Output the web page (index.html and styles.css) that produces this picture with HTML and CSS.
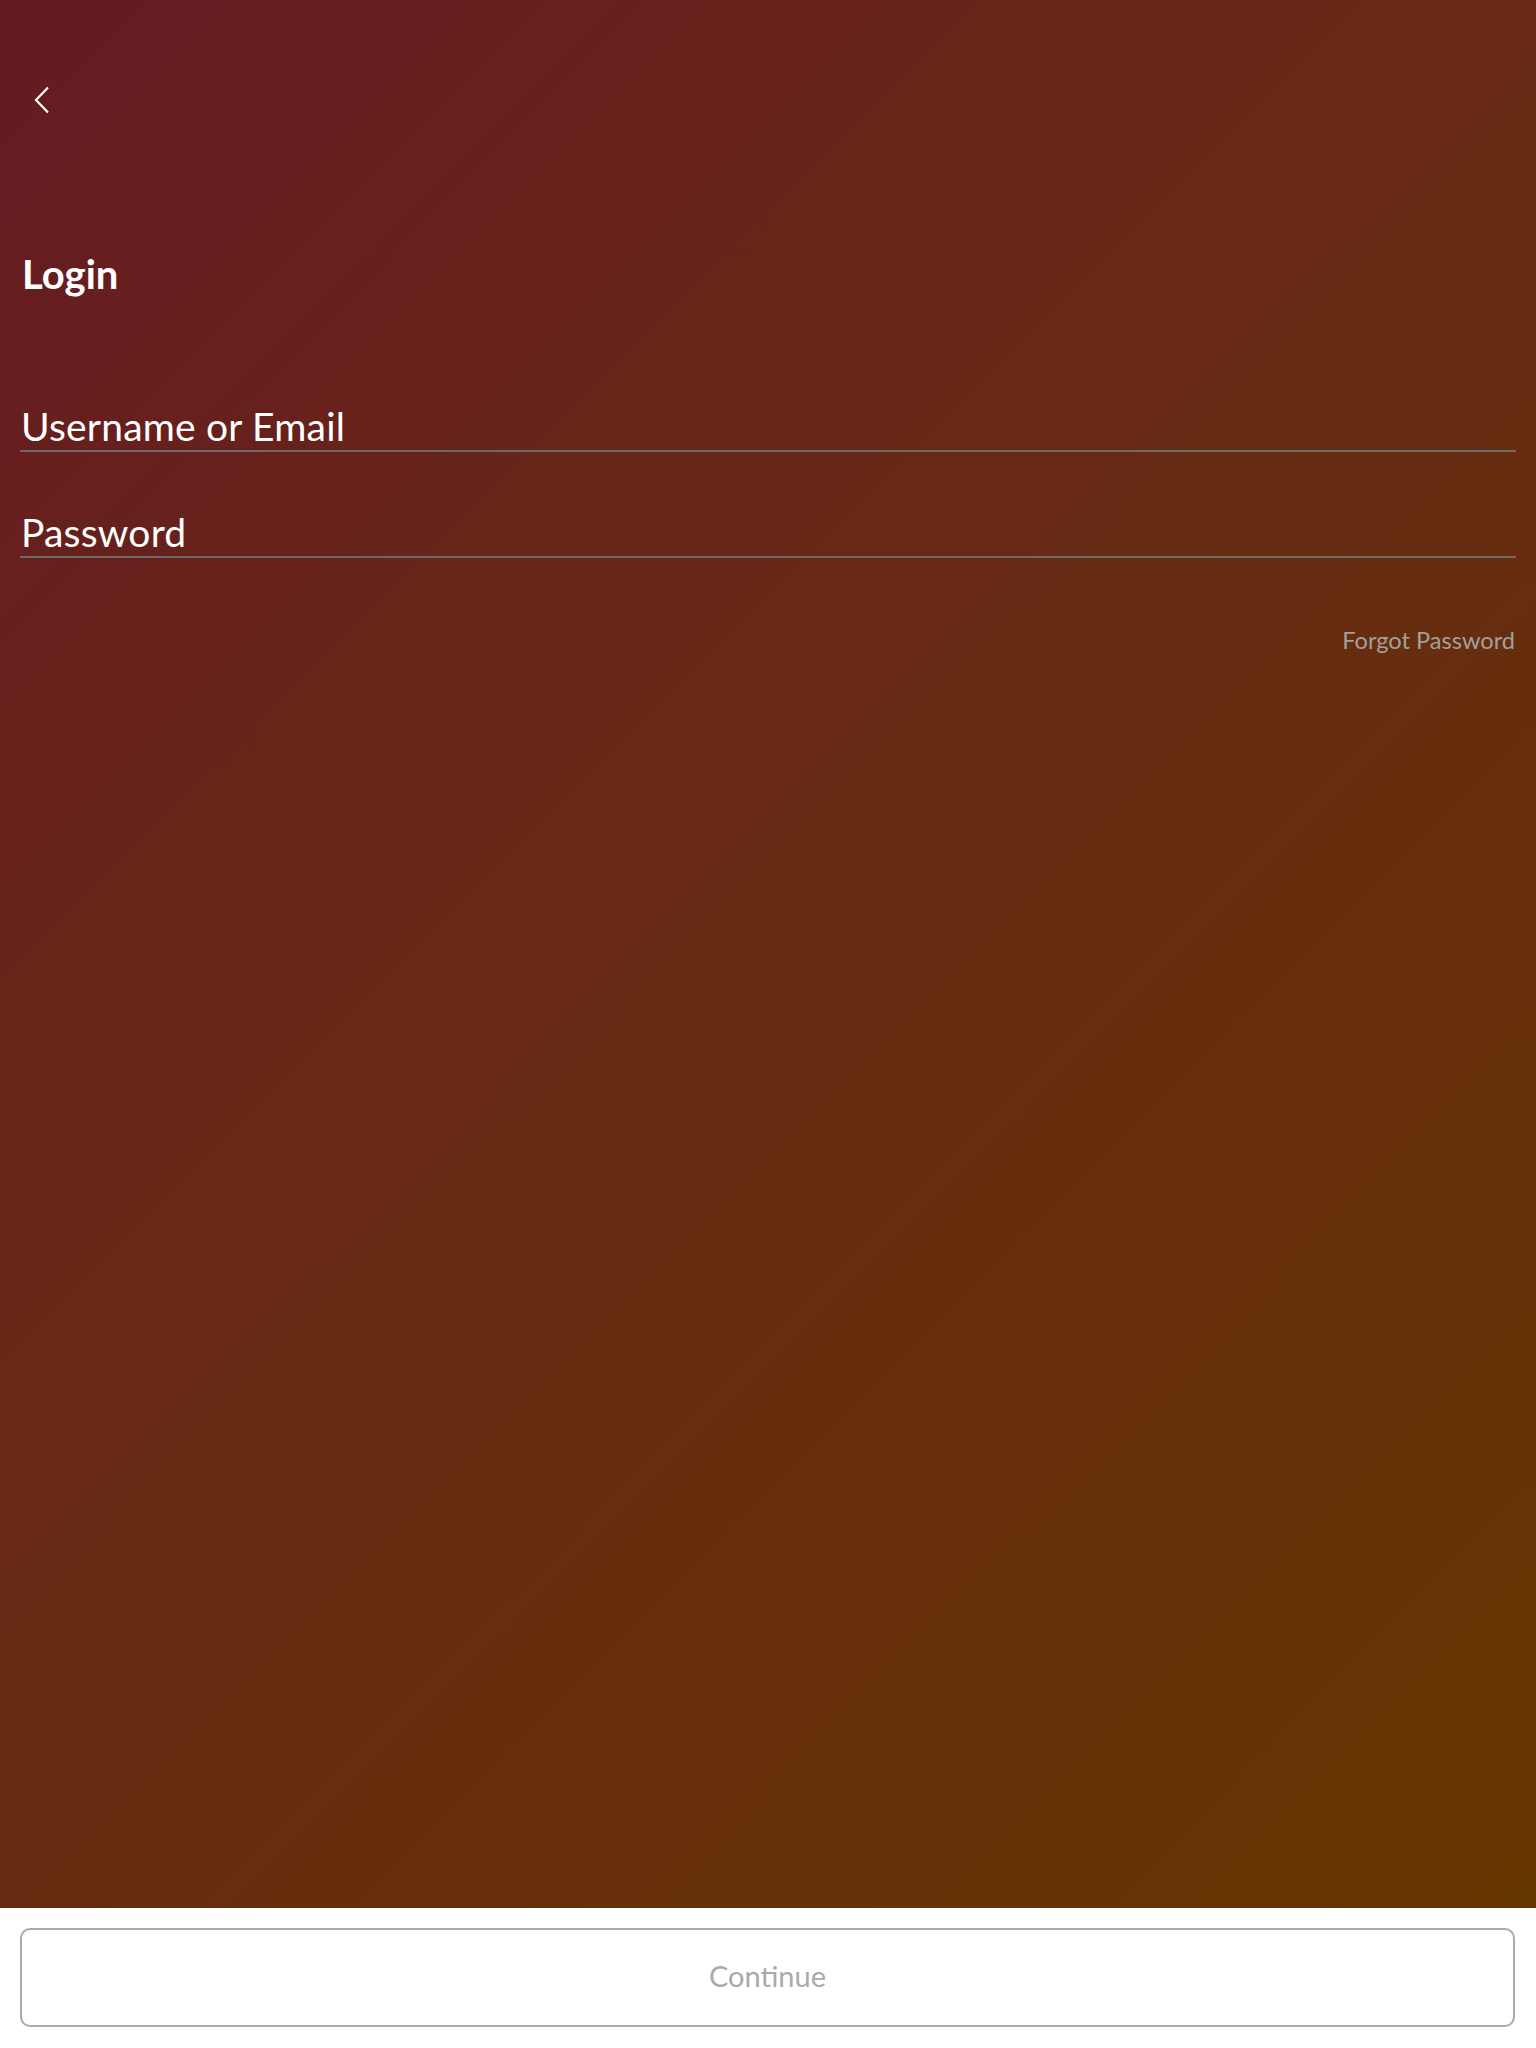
FILE: index.html
```html
<!DOCTYPE html>
<html>
<head>
<meta charset="utf-8">
<link rel="stylesheet" href="styles.css">
</head>
<body>
<main class="screen">
  <div class="topbar">
    <button class="back" aria-label="Back">
      <svg width="18" height="28" viewBox="0 0 18 28"><path d="M15 1.5 L3 14 L15 26.5" fill="none" stroke="#fff" stroke-width="2.2"/></svg>
    </button>
  </div>
  <h1 class="title">Login</h1>
  <div class="field"><span class="placeholder">Username or Email</span></div>
  <div class="field field-pw"><span class="placeholder">Password</span></div>
  <div class="forgot-row"><a class="forgot">Forgot Password</a></div>
</main>
<footer class="footer">
  <button class="continue">Continue</button>
</footer>
</body>
</html>
```
FILE: styles.css
```css
* { box-sizing: border-box; }
html, body { margin: 0; padding: 0; }
body {
  width: 1536px;
  height: 2048px;
  font-family: Lato, "Noto Sans", sans-serif;
  background: #fff;
  overflow: hidden;
}
.screen {
  height: 1908px;
  padding: 0 20px;
  background: linear-gradient(135deg, #661a22 0%, #672816 40%, #663600 100%);
  display: flex;
  flex-direction: column;
}
.topbar {
  height: 135px;
  padding-top: 86px;
}
.back {
  background: none;
  border: 0;
  padding: 0;
  margin-left: 13px;
  width: 18px;
  height: 28px;
  display: block;
}
.title {
  margin: 116px 0 0 2px;
  font-size: 40px;
  line-height: 46px;
  font-weight: 700;
  color: #fff;
}
.field {
  margin-top: 103px;
  border-bottom: 2px solid #6a6a6a;
  height: 52px;
  display: flex;
  align-items: flex-end;
  padding-left: 1px;
}
.field-pw { margin-top: 54px; }
.placeholder {
  font-size: 39px;
  line-height: 48px;
  color: #fff;
  padding-bottom: 0;
  letter-spacing: 0.2px;
}
.forgot-row {
  display: flex;
  justify-content: flex-end;
  margin-top: 68px;
}
.forgot {
  font-size: 23.6px;
  line-height: 28px;
  color: #a3a09c;
  margin-right: 1px;
}
.footer {
  padding: 20px 21px 0 20px;
}
.continue {
  width: 100%;
  height: 99px;
  border: 2px solid #aaaaaa;
  border-radius: 10px;
  background: #fff;
  font-family: Lato, "Noto Sans", sans-serif;
  font-size: 29px;
  color: #aaaaaa;
  padding: 0 0 5px 0;
}
```
